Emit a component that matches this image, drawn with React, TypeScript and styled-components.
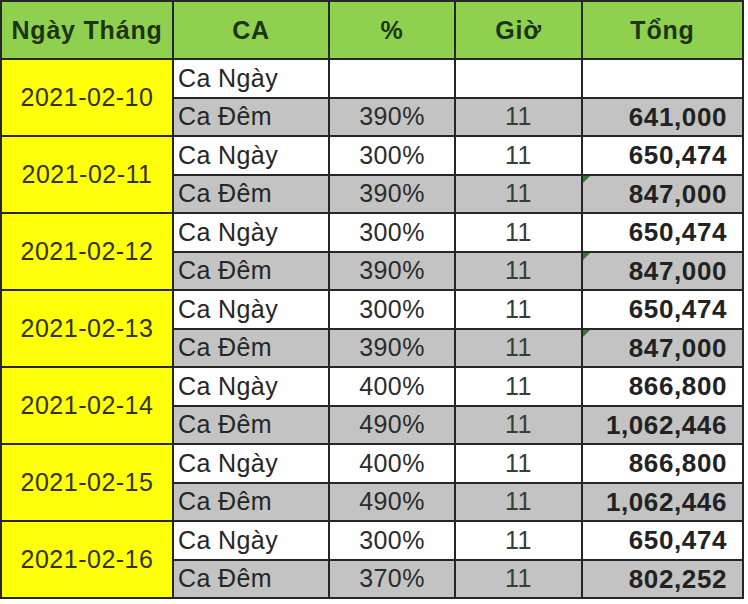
import React from 'react';
import styled, {createGlobalStyle} from 'styled-components';

const GlobalStyle = createGlobalStyle`
    html, body {
        margin: 0;
        padding: 0;
        background: #ffffff;
    }
    body {
        font-family: 'Liberation Sans', Arial, sans-serif;
    }
`;

const Sheet = styled.table`
    border-collapse: collapse;
    table-layout: fixed;
    width: 742px;
    margin: 0;
    border: 2px solid #262626;
    color: #2b2b2b;
`;

const HeadRow = styled.tr`
    height: 58px;
`;

const HeadCell = styled.th`
    background: #8fd14f;
    border: 2px solid #262626;
    color: #1d3516;
    font-size: 25px;
    font-weight: 700;
    letter-spacing: 0.8px;
    text-align: center;
    vertical-align: middle;
    padding: 0;
    white-space: nowrap;
`;

const BodyRow = styled.tr`
    height: 38.5px;
`;

const DateCell = styled.td`
    background: #ffff0a;
    border: 2px solid #262626;
    color: #33330f;
    font-size: 25px;
    letter-spacing: 0.5px;
    text-align: center;
    vertical-align: middle;
    padding: 0;
`;

const Cell = styled.td<{$night?: boolean; $align?: 'left' | 'center' | 'right'}>`
    position: relative;
    background: ${(p) => (p.$night ? '#c3c3c3' : '#ffffff')};
    border: 2px solid #262626;
    font-size: 25px;
    letter-spacing: 0.4px;
    text-align: ${(p) => p.$align || 'center'};
    vertical-align: middle;
    padding: 0 4px;
    white-space: nowrap;
    line-height: 1;
`;

const ShiftCell = styled(Cell)`
    padding-left: 4px;
    color: #262626;
`;

const HourCell = styled(Cell)`
    color: #354035;
`;

const TotalCell = styled(Cell)`
    font-size: 26px;
    font-weight: 700;
    letter-spacing: 0.6px;
    padding-right: 15px;
    color: #222222;
`;

// excel "number stored as text" marker
const Flag = styled.span`
    position: absolute;
    left: 0;
    top: 0;
    width: 0;
    height: 0;
    border-top: 7px solid #2f7d2a;
    border-right: 7px solid transparent;
`;

type Shift = {pct: string; hours: string; total: string; flag?: boolean};
type Day = {date: string; day: Shift; night: Shift};

const days: Day[] = [
    {
        date: '2021-02-10',
        day: {pct: '', hours: '', total: ''},
        night: {pct: '390%', hours: '11', total: '641,000'},
    },
    {
        date: '2021-02-11',
        day: {pct: '300%', hours: '11', total: '650,474'},
        night: {pct: '390%', hours: '11', total: '847,000', flag: true},
    },
    {
        date: '2021-02-12',
        day: {pct: '300%', hours: '11', total: '650,474'},
        night: {pct: '390%', hours: '11', total: '847,000', flag: true},
    },
    {
        date: '2021-02-13',
        day: {pct: '300%', hours: '11', total: '650,474'},
        night: {pct: '390%', hours: '11', total: '847,000', flag: true},
    },
    {
        date: '2021-02-14',
        day: {pct: '400%', hours: '11', total: '866,800'},
        night: {pct: '490%', hours: '11', total: '1,062,446'},
    },
    {
        date: '2021-02-15',
        day: {pct: '400%', hours: '11', total: '866,800'},
        night: {pct: '490%', hours: '11', total: '1,062,446'},
    },
    {
        date: '2021-02-16',
        day: {pct: '300%', hours: '11', total: '650,474'},
        night: {pct: '370%', hours: '11', total: '802,252'},
    },
];

const App = () => {
    return (
        <>
            <GlobalStyle />
            <Sheet>
                <colgroup>
                    <col style={{width: 172}} />
                    <col style={{width: 156}} />
                    <col style={{width: 126}} />
                    <col style={{width: 127}} />
                    <col style={{width: 161}} />
                </colgroup>
                <thead>
                    <HeadRow>
                        <HeadCell>Ngày Tháng</HeadCell>
                        <HeadCell>CA</HeadCell>
                        <HeadCell>%</HeadCell>
                        <HeadCell>Giờ</HeadCell>
                        <HeadCell>Tổng</HeadCell>
                    </HeadRow>
                </thead>
                <tbody>
                    {days.map((d) => (
                        <React.Fragment key={d.date}>
                            <BodyRow>
                                <DateCell rowSpan={2}>{d.date}</DateCell>
                                <ShiftCell $align={'left'}>Ca Ngày</ShiftCell>
                                <Cell>{d.day.pct}</Cell>
                                <HourCell>{d.day.hours}</HourCell>
                                <TotalCell $align={'right'}>{d.day.total}</TotalCell>
                            </BodyRow>
                            <BodyRow>
                                <ShiftCell $night $align={'left'}>
                                    Ca Đêm
                                </ShiftCell>
                                <Cell $night>{d.night.pct}</Cell>
                                <HourCell $night>{d.night.hours}</HourCell>
                                <TotalCell $night $align={'right'}>
                                    {d.night.flag && <Flag />}
                                    {d.night.total}
                                </TotalCell>
                            </BodyRow>
                        </React.Fragment>
                    ))}
                </tbody>
            </Sheet>
        </>
    );
};

export default App;
